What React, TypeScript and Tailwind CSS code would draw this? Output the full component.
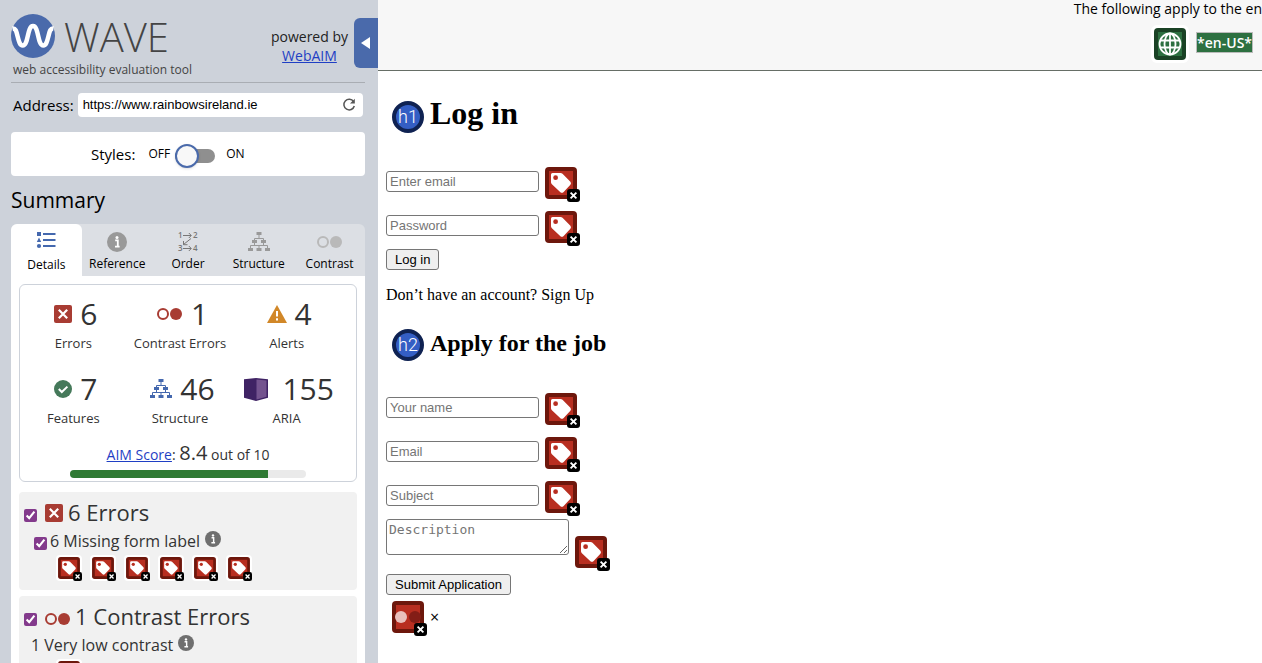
import type { ReactNode } from "react";

const fields = {
  login: [
    { label: "Enter email", type: "email" },
    { label: "Password", type: "password" },
  ],
  apply: [
    { label: "Your name", type: "text" },
    { label: "Email", type: "email" },
    { label: "Subject", type: "text" },
  ],
};

function IconFrame({ children, className }: { children: ReactNode; className: string }) {
  return (
    <svg viewBox="-3 -3 38 38" className={`${className} shrink-0`} aria-hidden="true">
      <rect x="-3" y="-3" width="38" height="38" rx="6" fill="#fff" />
      <rect width="32" height="32" rx="4" fill="#6d170c" />
      <rect x="4" y="4" width="24" height="24" fill="#b82e20" />
      {children}
      <rect x="22" y="22" width="13" height="13" rx="3" fill="#000" />
      <path d="M25.6 25.6l5.8 5.8M31.4 25.6l-5.8 5.8" stroke="#fff" strokeWidth="1.9" />
    </svg>
  );
}

function TagIcon({ className = "size-[38px]" }: { className?: string }) {
  return (
    <IconFrame className={className}>
      <path
        d="M7.5 6h8q1.2 0 2 .8l7.9 8q1.2 1.5 0 2.9l-7 7.5q-1.5 1.2-3 0L6.900 17.200q-.9-.8-.9-2V7.500Q6 6 7.500 6z"
        fill="#fff"
      />
      <circle cx="10.6" cy="10.7" r="2.4" fill="#b82e20" />
    </IconFrame>
  );
}

function ContrastIcon({ className = "size-[38px]" }: { className?: string }) {
  return (
    <IconFrame className={className}>
      <circle cx="9" cy="16" r="6" fill="#e9c0bc" />
      <circle cx="23" cy="16" r="6" fill="#831d16" />
    </IconFrame>
  );
}

function ErrorIcon() {
  return (
    <svg viewBox="0 0 18 18" className="size-[18px]" aria-hidden="true">
      <rect width="18" height="18" rx="2" fill="#a83c33" />
      <path d="M4.8 4.8l8.4 8.4M13.2 4.8l-8.4 8.4" stroke="#fff" strokeWidth="2.2" />
    </svg>
  );
}

function Circles({ className }: { className: string }) {
  return (
    <svg viewBox="0 0 26 14" className={`w-[26px] h-3.5 ${className}`} aria-hidden="true">
      <circle cx="6" cy="7" r="5" fill="none" stroke="currentColor" strokeWidth="2" />
      <circle cx="19" cy="7" r="6" fill="currentColor" />
    </svg>
  );
}

function AlertIcon() {
  return (
    <svg viewBox="0 0 20 18" className="w-5 h-[18px]" aria-hidden="true">
      <path d="M10 0l10 18H0z" fill="#d18728" />
      <path d="M10 6v5.5M10 13.2v2.3" stroke="#fff" strokeWidth="2" />
    </svg>
  );
}

function FeatureIcon() {
  return (
    <svg viewBox="0 0 18 18" className="size-[18px]" aria-hidden="true">
      <circle cx="9" cy="9" r="9" fill="#45795a" />
      <path d="M4.8 9l3 3 5.6-5.4" fill="none" stroke="#fff" strokeWidth="2" />
    </svg>
  );
}

function StructureIcon({ className }: { className: string }) {
  return (
    <svg viewBox="0 0 22 20" className={`w-[22px] h-5 ${className}`} aria-hidden="true">
      <path
        d="M11 3v3M6.5 9V6.5h9V9M6.5 11v3M15.5 11v3M2.5 16.5v-3h17v3M11 13.5v3"
        fill="none"
        stroke="currentColor"
      />
      <path
        d="M8.5 0h5v3h-5zM4 8h5v3H4zM13 8h5v3h-5zM0 16h5v3H0zM8.5 16h5v3h-5zM17 16h5v3h-5z"
        fill="currentColor"
      />
    </svg>
  );
}

function AriaIcon() {
  return (
    <svg viewBox="0 0 24 23" className="w-6 h-[23px] mr-1.5" aria-hidden="true">
      <path d="M0 1.2L12 0l12 1.2v18.600L12 23 0 19.800z" fill="#3f2364" />
      <path d="M12.5 1.5l10 1v16.200l-10 2.800z" fill="#74548f" />
    </svg>
  );
}

function InfoIcon({ className }: { className: string }) {
  return (
    <svg viewBox="0 0 20 20" className={className} aria-hidden="true">
      <circle cx="10" cy="10" r="10" fill="currentColor" />
      <path d="M8.2 8.400h2.600v6M8 14.600h4.600" fill="none" stroke="#fff" strokeWidth="1.800" />
      <circle cx="10" cy="5.500" r="1.500" fill="#fff" />
    </svg>
  );
}

function DetailsIcon() {
  return (
    <svg viewBox="0 0 20 18" className="w-5 h-[18px] mb-1 text-[#4468ae]" aria-hidden="true">
      <path d="M1 1h4v4H1zM3 6.600L5.200 11H.8z" fill="currentColor" />
      <circle cx="3" cy="15" r="2.100" fill="currentColor" />
      <path d="M7 3h12.500M7 9h12.500M7 15h12.500" stroke="currentColor" strokeWidth="2" />
    </svg>
  );
}

function OrderIcon() {
  return (
    <svg viewBox="0 0 20 20" className="w-5 h-5 overflow-visible text-[#777]" aria-hidden="true">
      <g fill="currentColor" fontFamily="Open Sans, sans-serif" fontSize="8" fontWeight="600">
        <text x="0" y="6">1</text>
        <text x="15" y="6">2</text>
        <text x="0" y="19">3</text>
        <text x="15" y="19">4</text>
      </g>
      <path
        d="M5 3.500h8M10.800 1l2.500 2.500L10.800 6M5 16.500h8M10.800 14l2.500 2.500-2.500 2.500M13 6.500l-7.500 6M5.500 9v3.700h4"
        fill="none"
        stroke="currentColor"
      />
    </svg>
  );
}

function GlobeIcon() {
  return (
    <svg viewBox="-3 -3 38 38" className="size-[38px] shrink-0" aria-hidden="true">
      <rect x="-3" y="-3" width="38" height="38" rx="6" fill="#fff" />
      <rect width="32" height="32" rx="4" fill="#1a4225" />
      <rect x="4" y="4" width="24" height="24" fill="#2d7041" />
      <g fill="none" stroke="#fff" strokeWidth="1.8">
        <circle cx="16" cy="16" r="10.5" />
        <ellipse cx="16" cy="16" rx="5.5" ry="10.5" />
        <path d="M6 12.500h20M6 19.500h20M16 5.500v21" />
      </g>
    </svg>
  );
}

const tabs = [
  { name: "Details", icon: <DetailsIcon /> },
  { name: "Reference", icon: <InfoIcon className="size-5 text-[#999]" /> },
  { name: "Order", icon: <OrderIcon /> },
  { name: "Structure", icon: <StructureIcon className="text-[#999]" /> },
  { name: "Contrast", icon: <Circles className="text-[#b9b9b9]" /> },
];

const stats = [
  { name: "Errors", count: 6, icon: <ErrorIcon /> },
  { name: "Contrast Errors", count: 1, icon: <Circles className="text-[#a83c33]" /> },
  { name: "Alerts", count: 4, icon: <AlertIcon /> },
  { name: "Features", count: 7, icon: <FeatureIcon /> },
  { name: "Structure", count: 46, icon: <StructureIcon className="text-[#4468ae]" /> },
  { name: "ARIA", count: 155, icon: <AriaIcon /> },
];

function Sidebar() {
  return (
    <aside className="relative w-[378px] shrink-0 flex flex-col bg-[#cdd2da] pl-[11px] pr-[13px] font-['Open_Sans',sans-serif] text-black overflow-hidden">
      <button
        aria-label="Collapse sidebar"
        className="absolute right-0 top-[18px] w-6 h-[50px] pr-0.5 rounded-l-md bg-[#4a6aab] flex items-center justify-center"
      >
        <svg viewBox="0 0 9 12" className="w-[9px] h-3" aria-hidden="true">
          <path d="M9 0v12L0 6z" fill="#fff" />
        </svg>
      </button>

      <header className="h-[83px] shrink-0 border-b border-[#a9adb3] flex justify-between">
        <div className="pt-3.5">
          <div className="flex items-center gap-[9px] h-11">
            <svg viewBox="0 0 44 44" className="size-11" aria-hidden="true">
              <circle cx="22" cy="22" r="22" fill="#4a6aab" />
              <path
                d="M1.500 14.500C5 14 5.500 18 6.500 22c1.500 6 2.500 9.500 5.200 9.500 6 0 4.300-19.500 10.300-19.500s4.300 19.500 10.300 19.500c2.700 0 3.700-3.500 5.200-9.500 1-4 1.500-8 5-7.500"
                fill="none"
                stroke="#fff"
                strokeWidth="4.5"
              />
            </svg>
            <span className="pt-0.5 text-[40px] leading-10 font-light text-[#444]">WAVE</span>
          </div>
          <p className="pl-0.5 text-[12px] leading-6 text-[#444]">web accessibility evaluation tool</p>
        </div>
        <p className="pt-[27px] pr-[17px] text-center text-[14px] leading-[19px] text-[#222]">
          powered by
          <br />
          <a href="#webaim" className="text-[#1f3fc4] underline">WebAIM</a>
        </p>
      </header>

      <div className="flex items-center gap-1 pt-2.5 pl-0.5 pr-0.5">
        <label htmlFor="address" className="text-[15px] leading-6">Address:</label>
        <div className="flex-1 flex items-center h-6 px-[5px] bg-white rounded">
          <input
            id="address"
            defaultValue="https://www.rainbowsireland.ie"
            className="flex-1 min-w-0 font-['Liberation_Sans',sans-serif] text-[13px] outline-none"
          />
          <button aria-label="Reload" className="pr-0.5">
            <svg viewBox="0 0 14 14" className="size-3.5" aria-hidden="true">
              <path d="M11.600 3.600A5.300 5.300 0 1 0 12.300 8" fill="none" stroke="#555" strokeWidth="1.500" />
              <path d="M12.800 .8v4.800H8z" fill="#555" />
            </svg>
          </button>
        </div>
      </div>

      <div className="mt-[15px] h-11 shrink-0 bg-white rounded flex items-center pl-20">
        <span className="text-[15px] mr-[13px]">Styles:</span>
        <label htmlFor="styles" className="text-[12px] mr-[5px]">OFF</label>
        <input
          id="styles"
          type="checkbox"
          className="relative mt-1 appearance-none w-10 h-3.5 rounded-full bg-[#8f8f8f] before:absolute before:-top-[5px] before:left-0 before:size-6 before:rounded-full before:border-2 before:border-[#4a6aab] before:bg-[#f8f8f8] before:shadow"
        />
        <span className="text-[12px] ml-[11px]">ON</span>
      </div>

      <h2 className="mt-2 h-8 text-[21px] leading-8">Summary</h2>

      <div className="mt-2 grid grid-cols-5 shrink-0 bg-[#dcdfe4] rounded-t-md">
        {tabs.map((tab) => (
          <button
            key={tab.name}
            className={`flex flex-col items-center pt-[7px] h-[52px] rounded-t-md text-[12px] leading-6 ${tab.name === "Details" ? "bg-white" : ""}`}
          >
            <span className="h-6 flex items-center">{tab.icon}</span>
            {tab.name}
          </button>
        ))}
      </div>

      <div className="flex-1 min-h-0 bg-white px-2 pt-2 text-[#333] overflow-hidden">
        <section className="h-[198px] border border-[#cdd2da] rounded-md">
          <ul className="grid grid-cols-3 pt-2 pr-4">
            {stats.map((stat) => (
              <li key={stat.name} className="h-[75px] flex flex-col items-center">
                <span className="flex items-center gap-2 pl-[5px] text-[30px] leading-[42px]">
                  {stat.icon}
                  {stat.count}
                </span>
                <span className="text-[13px] leading-4">{stat.name}</span>
              </li>
            ))}
          </ul>
          <p className="h-6 text-center text-[14px] leading-5">
            <a href="#aim" className="text-[#1f3fc4] underline">AIM Score</a>:{" "}
            <span className="text-[20px]">8.4</span> out of 10
          </p>
          <div className="mx-[50px] mt-[3px] h-2 rounded-full bg-[#eaeaea] overflow-hidden">
            <div className="h-full w-[84%] bg-[#2f7a34]" />
          </div>
        </section>

        <section className="mt-2.5 h-[98px] rounded bg-[#f1f1f1] px-[5px]">
          <div className="flex items-center h-[42px]">
            <input id="errors" type="checkbox" defaultChecked className="size-[13px] mt-1 mr-2 accent-[#833a8c]" />
            <ErrorIcon />
            <label htmlFor="errors" className="ml-[5px] pb-0.5 text-[22px]">6 Errors</label>
          </div>
          <div className="flex items-center h-[14px] pl-2.5">
            <input id="missing" type="checkbox" defaultChecked className="size-[13px] mt-1 accent-[#833a8c]" />
            <label htmlFor="missing" className="ml-[3px] text-[16px]">6 Missing form label</label>
            <InfoIcon className="size-4 ml-[5px] mb-1 text-[#6f6f6f]" />
          </div>
          <div className="flex gap-2 pl-8 pt-[7px]">
            {[1, 2, 3, 4, 5, 6].map((n) => (
              <TagIcon key={n} className="size-[26px]" />
            ))}
          </div>
        </section>

        <section className="mt-1.5 h-[98px] rounded bg-[#f1f1f1] px-[5px]">
          <div className="flex items-center h-[42px]">
            <input id="contrast" type="checkbox" defaultChecked className="size-[13px] mt-1 mr-2 accent-[#833a8c]" />
            <Circles className="mt-1 text-[#a83c33]" />
            <label htmlFor="contrast" className="ml-1 pb-0.5 text-[22px]">1 Contrast Errors</label>
          </div>
          <div className="flex items-center h-[14px] pl-[7px] text-[16px]">
            1 Very low contrast
            <InfoIcon className="size-4 ml-[5px] mb-1 text-[#6f6f6f]" />
          </div>
          <div className="pl-8 pt-[7px]">
            <ContrastIcon className="size-[26px]" />
          </div>
        </section>
      </div>
    </aside>
  );
}

function HeadingBadge({ level }: { level: string }) {
  return (
    <span className="m-[3px] size-8 shrink-0 rounded-full border-4 border-[#0f2252] bg-[#345ec4] flex items-center justify-center font-['Roboto',sans-serif] text-[18px] font-light text-white">
      {level}
    </span>
  );
}

function Field({ label, type }: { label: string; type: string }) {
  return (
    <div className="flex items-start gap-[3px]">
      <input
        type={type}
        aria-label={label}
        placeholder={label}
        className="mt-[7px] w-[153px] h-[21px] px-[3px] border border-[#767676] rounded-[3px] font-['Liberation_Sans',sans-serif] text-[13px] placeholder:text-[#757575]"
      />
      <TagIcon />
    </div>
  );
}

function PushButton({ children }: { children: string }) {
  return (
    <button
      type="submit"
      className="mt-[3px] h-[21px] self-start px-2 border border-[#767676] rounded-[3px] bg-[#efefef] font-['Liberation_Sans',sans-serif] text-[13px] leading-[19px]"
    >
      {children}
    </button>
  );
}

export default function App() {
  return (
    <div className="flex h-screen overflow-hidden bg-white text-black">
      <Sidebar />

      <main className="flex-1 min-w-0">
        <div className="h-[71px] border-b border-[#666e66] bg-[#f7f7f7] font-['Open_Sans',sans-serif] text-[14px] overflow-hidden">
          <p className="text-right leading-[18px]">The following apply to the en</p>
          <div className="flex justify-end items-center gap-[7px] pt-[7px] pr-[9px]">
            <GlobeIcon />
            <span className="mb-[3px] h-[21px] border border-[#bbb] bg-[#2d7041] text-white font-semibold leading-[19px]">
              *en-US*
            </span>
          </div>
        </div>

        <div className="px-2 pt-[27px] font-['Liberation_Serif',serif]">
          <h1 className="flex items-center text-[32px] leading-7 font-bold pl-[3px] gap-[3px]">
            <HeadingBadge level="h1" />
            <span className="pb-2">Log in</span>
          </h1>
          <form className="mt-7 flex flex-col">
            <div className="flex flex-col gap-1.5">
              {fields.login.map((field) => (
                <Field key={field.label} {...field} />
              ))}
            </div>
            <PushButton>Log in</PushButton>
          </form>

          <p className="mt-[13px] text-[16px] leading-6">Don’t have an account? Sign Up</p>

          <h2 className="mt-[19px] flex items-center text-[24px] leading-8 font-bold pl-[3px] gap-[3px]">
            <HeadingBadge level="h2" />
            <span className="pb-1">Apply for the job</span>
          </h2>
          <form className="mt-[26px] flex flex-col">
            <div className="flex flex-col gap-1.5">
              {fields.apply.map((field) => (
                <Field key={field.label} {...field} />
              ))}
            </div>
            <div className="mt-[3px] flex items-end gap-[3px]">
              <textarea
                aria-label="Description"
                placeholder="Description"
                className="mb-4 w-[183px] h-9 px-0.5 py-0.5 border border-[#767676] rounded-[3px] font-['DejaVu_Sans_Mono',monospace] text-[13px] leading-4 placeholder:text-[#757575]"
              />
              <TagIcon />
            </div>
            <PushButton>Submit Application</PushButton>
          </form>
          <div className="mt-[3px] pl-[3px] flex items-center gap-[3px]">
            <ContrastIcon />
            <span className="font-['Open_Sans',sans-serif] text-[16px]">×</span>
          </div>
        </div>
      </main>
    </div>
  );
}
